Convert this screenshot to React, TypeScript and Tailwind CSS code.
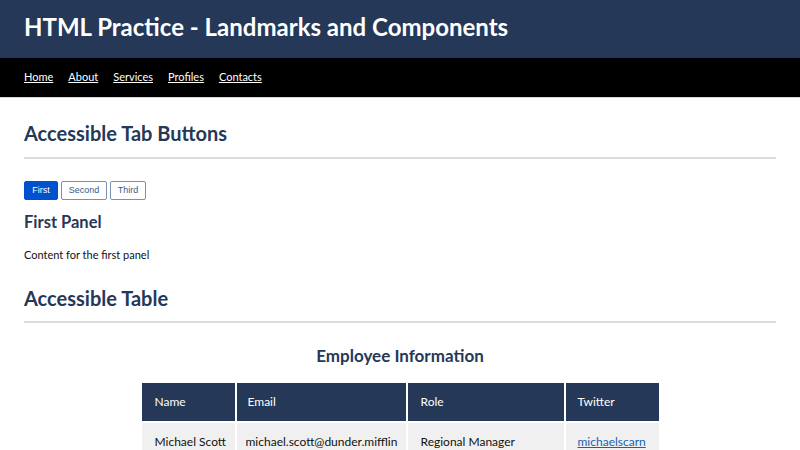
import React from "react";

export default function App() {
  const lato = { fontFamily: "Lato, 'Noto Sans', sans-serif" };
  const arial = { fontFamily: "'Liberation Sans', Arial, sans-serif" };
  return (
    <div className="w-[800px] h-[450px] overflow-hidden bg-white" style={lato}>
      <header className="bg-[#253858] h-[58px] flex items-center px-6 pb-[5px]">
        <h1 className="text-white font-bold text-[24px] leading-none">HTML Practice - Landmarks and Components</h1>
      </header>
      <nav className="bg-black h-[40px] flex items-center px-6 gap-[15px] border-b border-[#d8d8d8]">
        {["Home", "About", "Services", "Profiles", "Contacts"].map((l) => (
          <a key={l} href="#" className="text-white underline text-[11px]">{l}</a>
        ))}
      </nav>
      <main className="px-6">
        <section>
          <h2 className="text-[#253858] font-bold text-[20px] pt-[25px] pb-[14px] leading-none">Accessible Tab Buttons</h2>
          <div className="h-[2px] bg-[#dcdcdc]" />
          <div className="flex gap-[3px] mt-[22px]">
            <button className="h-[19px] w-[34px] rounded-[2px] bg-[#0052cc] border border-[#0052cc] text-white text-[9px]" style={arial}>First</button>
            <button className="h-[19px] w-[46px] rounded-[2px] bg-white border border-[#7d8fae] text-[#3d5a8a] text-[9px]" style={arial}>Second</button>
            <button className="h-[19px] w-[36px] rounded-[2px] bg-white border border-[#7d8fae] text-[#3d5a8a] text-[9px]" style={arial}>Third</button>
          </div>
          <h3 className="text-[#253858] font-bold text-[16.5px] mt-[14px] leading-none">First Panel</h3>
          <p className="text-[#111] text-[11px] mt-[18px] leading-none">Content for the first panel</p>
        </section>
        <section>
          <h2 className="text-[#253858] font-bold text-[20px] pt-[28px] pb-[13px] leading-none">Accessible Table</h2>
          <div className="h-[2px] bg-[#dcdcdc]" />
          <table className="mx-auto mt-[24px] border-collapse table-fixed w-[517px]">
            <caption className="text-[#253858] font-bold text-[17px] leading-none pb-[19px]">Employee Information</caption>
            <colgroup>
              <col className="w-[94px]" />
              <col className="w-[171px]" />
              <col className="w-[158px]" />
              <col className="w-[94px]" />
            </colgroup>
            <thead>
              <tr className="bg-[#253858] text-white text-[12px] h-[39px]">
                <th className="font-normal text-left pl-[13px] border-r-2 border-white">Name</th>
                <th className="font-normal text-left pl-[11px] border-r-2 border-white">Email</th>
                <th className="font-normal text-left pl-[13px] border-r-2 border-white">Role</th>
                <th className="font-normal text-left pl-[12px]">Twitter</th>
              </tr>
            </thead>
            <tbody>
              <tr className="bg-[#f0f0f0] text-[#111] text-[12px] h-[39px] border-t-2 border-white">
                <td className="pl-[13px] border-r-2 border-white whitespace-nowrap">Michael Scott</td>
                <td className="pl-[9px] border-r-2 border-white whitespace-nowrap overflow-hidden">michael.scott@dunder.mifflin</td>
                <td className="pl-[13px] border-r-2 border-white whitespace-nowrap">Regional Manager</td>
                <td className="pl-[12px] whitespace-nowrap"><a href="#" className="text-[#1a5fb4] underline">michaelscarn</a></td>
              </tr>
            </tbody>
          </table>
        </section>
      </main>
    </div>
  );
}
